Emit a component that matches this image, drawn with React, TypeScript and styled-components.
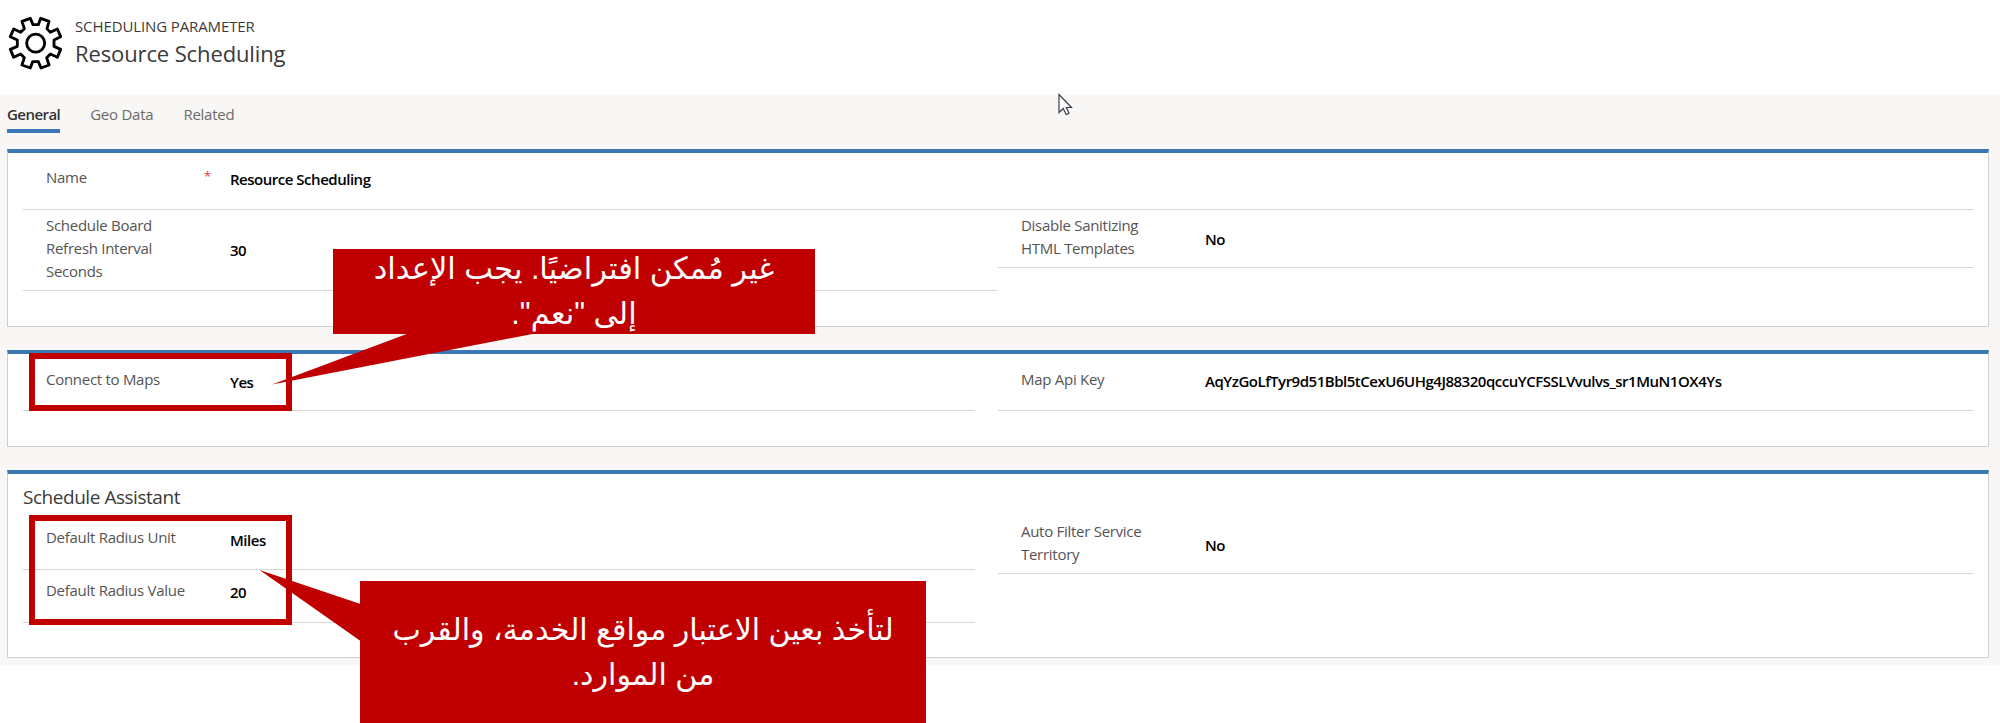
import React from 'react';
import styled, { createGlobalStyle } from 'styled-components';

const ACCENT = '#3a78b7';
const ALERT = '#c00000';

const GlobalStyle = createGlobalStyle`
  *, *::before, *::after { box-sizing: border-box; }
  body {
    margin: 0;
    background: #fff;
    color: #333;
    font-family: "Open Sans", "Noto Sans", sans-serif;
    font-size: 15px;
    line-height: 23px;
  }
`;

const Page = styled.div`
  position: relative;
  width: 2000px;
  height: 723px;
  overflow: hidden;
`;

const Header = styled.header`
  display: flex;
  gap: 13px;
  height: 95px;
  padding: 15px 0 0 8px;
`;

const GearIcon = styled.svg`
  width: 54px;
  height: 56px;
`;

const Titles = styled.div`
  display: flex;
  flex-direction: column;
`;

const EntityName = styled.span`
  line-height: 23px;
  letter-spacing: -0.11px;
  color: #3b3a39;
`;

const RecordName = styled.h1`
  margin: 0;
  font-size: 22px;
  line-height: 31px;
  font-weight: 400;
  letter-spacing: -0.12px;
  color: #3b3a39;
`;

const FormBody = styled.main`
  display: flex;
  flex-direction: column;
  height: 570px;
  padding: 8px 11px 0 7px;
  background: #f8f7f5;
`;

const TabList = styled.nav`
  display: flex;
  flex-shrink: 0;
  gap: 30px;
  height: 30px;
  margin-bottom: 16px;
`;

const Tab = styled.span<{ $active?: boolean }>`
  height: 30px;
  letter-spacing: ${(p) => (p.$active ? '-0.55px' : '-0.25px')};
  font-weight: ${(p) => (p.$active ? 600 : 400)};
  color: ${(p) => (p.$active ? '#333' : '#6b6a69')};
  border-bottom: 4px solid ${(p) => (p.$active ? ACCENT : 'transparent')};
`;

const Card = styled.section<{ $height: number }>`
  flex-shrink: 0;
  height: ${(p) => p.$height}px;
  margin-bottom: 23px;
  padding: 0 15px;
  background: #fff;
  border: 1px solid #cfcfcf;
  border-top: 4px solid ${ACCENT};

  &:last-child { margin-bottom: 0; }
`;

const CardTitle = styled.h2`
  height: 36px;
  margin: 0;
  padding-top: 10px;
  font-size: 19px;
  line-height: 26px;
  font-weight: 400;
  letter-spacing: -0.46px;
  color: #3b3a39;
`;

const Columns = styled.div<{ $left: number; $gap: number }>`
  display: grid;
  grid-template-columns: ${(p) => p.$left}px 1fr;
  column-gap: ${(p) => p.$gap}px;
  align-items: start;
`;

const Column = styled.div`
  display: flex;
  flex-direction: column;
`;

const FieldRow = styled.div<{ $height: number }>`
  display: flex;
  height: ${(p) => p.$height}px;
  padding-left: 23px;
  border-bottom: 1px solid #d6d6d6;
`;

const Label = styled.label<{ $top: number }>`
  width: 145px;
  padding-top: ${(p) => p.$top}px;
  letter-spacing: -0.28px;
  color: #555453;
`;

const Required = styled.span`
  width: 39px;
  padding: 12px 0 0 13px;
  font-size: 13px;
  color: #f03a2e;
`;

const Value = styled.span<{ $top: number }>`
  padding-top: ${(p) => p.$top}px;
  font-weight: 600;
  letter-spacing: -0.48px;
  color: #000;
  white-space: nowrap;
`;

const Overlay = styled.svg`
  position: absolute;
  inset: 0;
  width: 2000px;
  height: 723px;
  pointer-events: none;
`;

const Highlight = styled.div<{ $top: number; $height: number }>`
  position: absolute;
  left: 29px;
  top: ${(p) => p.$top}px;
  width: 263px;
  height: ${(p) => p.$height}px;
  border: 6px solid ${ALERT};
`;

const Callout = styled.div<{ $x: number; $y: number; $w: number; $h: number; $size: number }>`
  position: absolute;
  left: ${(p) => p.$x}px;
  top: ${(p) => p.$y}px;
  width: ${(p) => p.$w}px;
  height: ${(p) => p.$h}px;
  display: flex;
  flex-direction: column;
  justify-content: center;
  padding-bottom: 1px;
  overflow: hidden;
  background: ${ALERT};
  color: #fff;
  direction: rtl;
  text-align: center;
  font-family: "Liberation Sans", "DejaVu Sans", sans-serif;
  font-size: ${(p) => p.$size}px;
  line-height: 45px;
  white-space: nowrap;
`;

const CalloutLine = styled.div`
  flex-shrink: 0;
  height: 45px;
`;

type FieldProps = {
  label: string;
  value: string;
  height: number;
  labelTop: number;
  valueTop: number;
  required?: boolean;
};

function Field({ label, value, height, labelTop, valueTop, required }: FieldProps) {
  return (
    <FieldRow $height={height}>
      <Label $top={labelTop}>{label}</Label>
      <Required>{required ? '*' : ''}</Required>
      <Value $top={valueTop}>{value}</Value>
    </FieldRow>
  );
}

export default function App() {
  return (
    <Page>
      <GlobalStyle />
      <Header>
        <GearIcon viewBox="24 45 162 168" fill="none" stroke="#000" strokeWidth="8.5" strokeLinejoin="round">
          <path d="M66 64L91 55L99 74H115L122 55L147 64L141 86L151 97L172 87L182 110L162 120V139L182 148L172 172L151 162L140 173L147 195L123 204L115 185H98L91 204L66 195L73 173L62 162L41 172L31 148L52 139V120L31 110L41 87L62 97L73 86Z" />
          <circle cx="107" cy="129.500" r="27" />
        </GearIcon>
        <Titles>
          <EntityName>SCHEDULING PARAMETER</EntityName>
          <RecordName>Resource Scheduling</RecordName>
        </Titles>
      </Header>

      <FormBody>
        <TabList>
          <Tab $active>General</Tab>
          <Tab>Geo Data</Tab>
          <Tab>Related</Tab>
        </TabList>

        <Card $height={178}>
          <Field label="Name" value="Resource Scheduling" height={57} labelTop={13} valueTop={15} required />
          <Columns $left={974} $gap={1}>
            <Field label="Schedule Board Refresh Interval Seconds" value="30" height={81} labelTop={4} valueTop={29} />
            <Field label="Disable Sanitizing HTML Templates" value="No" height={58} labelTop={4} valueTop={18} />
          </Columns>
        </Card>

        <Card $height={97}>
          <Columns $left={952} $gap={23}>
            <Field label="Connect to Maps" value="Yes" height={57} labelTop={14} valueTop={17} />
            <Field
              label="Map Api Key"
              value="AqYzGoLfTyr9d51Bbl5tCexU6UHg4J88320qccuYCFSSLVvulvs_sr1MuN1OX4Ys"
              height={57}
              labelTop={14}
              valueTop={16}
            />
          </Columns>
        </Card>

        <Card $height={188}>
          <CardTitle>Schedule Assistant</CardTitle>
          <Columns $left={952} $gap={23}>
            <Column>
              <Field label="Default Radius Unit" value="Miles" height={60} labelTop={16} valueTop={19} />
              <Field label="Default Radius Value" value="20" height={53} labelTop={9} valueTop={11} />
            </Column>
            <Field label="Auto Filter Service Territory" value="No" height={64} labelTop={10} valueTop={24} />
          </Columns>
        </Card>
      </FormBody>

      <Highlight $top={353} $height={58} />
      <Highlight $top={515} $height={110} />

      <Callout $x={333} $y={249} $w={482} $h={85} $size={30.5}>
        <CalloutLine>غير مُمكن افتراضيًا. يجب الإعداد</CalloutLine>
        <CalloutLine>إلى "نعم".</CalloutLine>
      </Callout>
      <Callout $x={360} $y={581} $w={566} $h={142} $size={30.1}>
        <CalloutLine>لتأخذ بعين الاعتبار مواقع الخدمة، والقرب</CalloutLine>
        <CalloutLine>من الموارد.</CalloutLine>
      </Callout>

      <Overlay viewBox="0 0 2000 723">
        <path d="M408 333.500L272 384.500L535 333.500Z" fill={ALERT} />
        <path d="M360.500 604L259.500 570L360.500 641Z" fill={ALERT} />
        <path
          d="M1059 94.500V112.500L1063.200 108.500L1066.200 114.500L1069 113.200L1066.300 107.500H1071.500Z"
          fill="#fff"
          stroke="#3c3c46"
          strokeWidth="1.200"
        />
      </Overlay>
    </Page>
  );
}
